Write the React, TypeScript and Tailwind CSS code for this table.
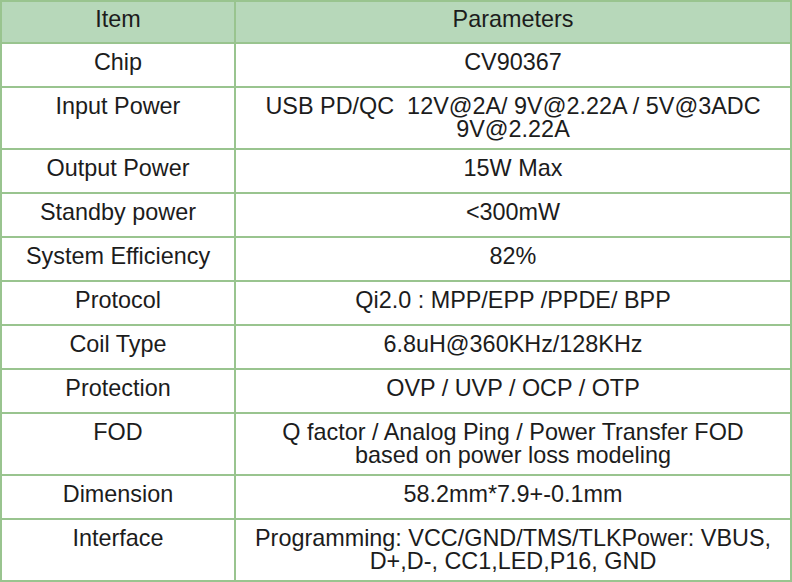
import { Fragment } from "react";

const rows: { item: string; lines: string[]; tall?: boolean }[] = [
  { item: "Chip", lines: ["CV90367"] },
  { item: "Input Power", lines: ["USB PD/QC  12V@2A/ 9V@2.22A / 5V@3ADC", "9V@2.22A"], tall: true },
  { item: "Output Power", lines: ["15W Max"] },
  { item: "Standby power", lines: ["<300mW"] },
  { item: "System Efficiency", lines: ["82%"] },
  { item: "Protocol", lines: ["Qi2.0 : MPP/EPP /PPDE/ BPP"] },
  { item: "Coil Type", lines: ["6.8uH@360KHz/128KHz"] },
  { item: "Protection", lines: ["OVP / UVP / OCP / OTP"] },
  { item: "FOD", lines: ["Q factor / Analog Ping / Power Transfer FOD", "based on power loss modeling"], tall: true },
  { item: "Dimension", lines: ["58.2mm*7.9+-0.1mm"] },
  { item: "Interface", lines: ["Programming: VCC/GND/TMS/TLKPower: VBUS,", "D+,D-, CC1,LED,P16, GND"], tall: true },
];

export default function App() {
  return (
    <div className="w-[792px] h-[582px] bg-white font-['Liberation_Sans',Arial,sans-serif] text-[23.4px] leading-[22.5px] text-[#1c1c1c]">
      <div className="grid grid-cols-[232px_554px] gap-[2px] p-[2px] bg-[#99c48f]">
        <div className="h-[40px] bg-[#b7d8ba] text-center pt-[6px]">Item</div>
        <div className="h-[40px] bg-[#b7d8ba] text-center pt-[6px]">Parameters</div>
        {rows.map((r) => (
          <Fragment key={r.item}>
            <div className={`${r.tall ? "h-[60px]" : "h-[42px]"} bg-white text-center pt-[7px]`}>
              {r.item}
            </div>
            <div className={`${r.tall ? "h-[60px]" : "h-[42px]"} bg-white text-center pt-[7px] whitespace-pre`}>
              {r.lines.map((l, i) => (
                <div key={i}>{l}</div>
              ))}
            </div>
          </Fragment>
        ))}
      </div>
    </div>
  );
}
